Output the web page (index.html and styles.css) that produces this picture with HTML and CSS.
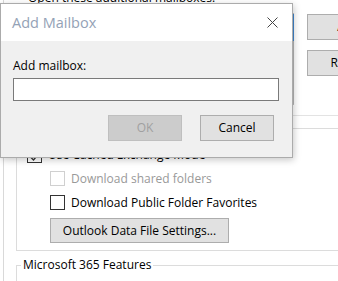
FILE: index.html
```html
<!DOCTYPE html>
<html>
<head>
<meta charset="utf-8">
<link rel="stylesheet" href="styles.css">
</head>
<body>
<div class="tab">
  <div class="top-label">Open these additional mailboxes:</div>
  <div class="mailboxes">
    <div class="listbox"><div class="list-sel"></div></div>
    <div class="side-buttons">
      <button class="btn side">Add...</button>
      <button class="btn side">Remove</button>
    </div>
  </div>
  <div class="sep"></div>
  <fieldset class="group cached">
    <legend>Cached Exchange Mode Settings</legend>
    <div class="check-row first"><span class="box"><svg width="13" height="13" viewBox="0 0 13 13"><path d="M2.5 8l3 3 5-6" fill="none" stroke="#333" stroke-width="1.3"/></svg></span>Use Cached Exchange Mode</div>
    <div class="sub">
      <div class="check-row disabled"><span class="box"></span>Download shared folders</div>
      <div class="check-row"><span class="box"></span>Download Public Folder Favorites</div>
      <button class="btn wide">Outlook Data File Settings...</button>
    </div>
  </fieldset>
  <fieldset class="group m365">
    <legend>Microsoft 365 Features</legend>
  </fieldset>
</div>

<div class="dialog">
  <div class="titlebar">
    <span class="title">Add Mailbox</span>
    <svg class="close" width="11" height="11" viewBox="0 0 11 11"><path d="M0.5 0.5L10.5 10.5M10.5 0.5L0.5 10.5" stroke="#444" stroke-width="1"/></svg>
  </div>
  <div class="dialog-body">
    <div class="field-label">Add mailbox:</div>
    <div class="input"></div>
    <div class="actions">
      <button class="btn dlg disabled">OK</button>
      <button class="btn dlg">Cancel</button>
    </div>
  </div>
</div>
</body>
</html>
```
FILE: styles.css
```css
html, body {
  margin: 0;
  padding: 0;
}
body {
  width: 338px;
  height: 281px;
  overflow: hidden;
  position: relative;
  background: #fff;
  font-family: "Open Sans", "Noto Sans", sans-serif;
  font-size: 12px;
  color: #000;
}
.tab {
  width: 420px;
  height: 320px;
  margin-left: 3px;
  margin-top: -10px;
  padding-left: 12px;
  border-left: 1px solid #d9d9d9;
}
.top-label {
  line-height: 16px;
  padding-left: 12px;
  white-space: nowrap;
}
.mailboxes {
  display: flex;
  margin-top: 7px;
  height: 92px;
}
.listbox {
  width: 278px;
  height: 92px;
  box-sizing: border-box;
  border: 1px solid #c8c8c8;
  border-right-color: #b5b5b5;
}
.list-sel {
  height: 27px;
  background: #3f86cf;
  margin-right: -1px;
}
.side-buttons {
  display: flex;
  flex-direction: column;
  gap: 10px;
  margin-left: 13px;
  padding-top: 1px;
}
.btn {
  font-family: inherit;
  font-size: 12px;
  color: #000;
  background: #e1e1e1;
  border: 1px solid #adadad;
  border-radius: 0;
  padding: 0;
  margin: 0;
  box-sizing: border-box;
  line-height: 16px;
}
.side {
  width: 92px;
  height: 26px;
}
.sep {
  margin-top: 10px;
  border-top: 1px solid #e3e3e3;
}
.group {
  margin: 0;
  border: 1px solid #dcdcdc;
  padding: 6px 0 7px 10px;
  min-width: 0;
}
.group legend {
  padding: 0 2px;
  margin-left: -6px;
  line-height: 16px;
  white-space: nowrap;
}
.cached {
  margin-top: 4px;
}
.check-row {
  display: flex;
  align-items: center;
  height: 24px;
  gap: 6px;
  white-space: nowrap;
}
.check-row.first .box {
  margin-top: 2px;
}
.box {
  width: 15px;
  height: 15px;
  box-sizing: border-box;
  border: 1px solid #333;
  background: #fff;
  display: flex;
  align-items: center;
  justify-content: center;
  flex: none;
}
.check-row.disabled {
  color: #999;
}
.check-row.disabled .box {
  border-color: #d0d0d0;
}
.sub {
  padding-left: 23px;
  display: flex;
  flex-direction: column;
  align-items: flex-start;
}
.wide {
  margin-top: 4px;
  width: 179px;
  height: 25px;
}
.m365 {
  margin-top: 6px;
  height: 60px;
}

/* Dialog overlay */
.dialog {
  position: absolute;
  left: 0;
  top: 3px;
  width: 293px;
  height: 155px;
  box-sizing: border-box;
  border: 1px solid #ababab;
  background: #f0f0f0;
  box-shadow: 1px 2px 7px rgba(0, 0, 0, 0.22);
  display: flex;
  flex-direction: column;
}
.titlebar {
  height: 37px;
  background: #fff;
  display: flex;
  align-items: center;
  justify-content: space-between;
  padding: 0 14px 0 11px;
  flex: none;
}
.title {
  font-size: 14.5px;
  color: #94a2b6;
  line-height: 20px;
}
.close {
  display: block;
}
.dialog-body {
  padding: 17px 13px 0 12px;
  display: flex;
  flex-direction: column;
}
.field-label {
  line-height: 16px;
}
.input {
  margin-top: 4px;
  height: 23px;
  box-sizing: border-box;
  background: #fff;
  border: 1px solid #7a7a7a;
}
.actions {
  margin-top: 14px;
  display: flex;
  justify-content: flex-end;
  gap: 18px;
  padding-right: 5px;
}
.dlg {
  width: 74px;
  height: 26px;
}
.dlg.disabled {
  background: #cccccc;
  border-color: #bfbfbf;
  color: #a0a0a0;
}
```
